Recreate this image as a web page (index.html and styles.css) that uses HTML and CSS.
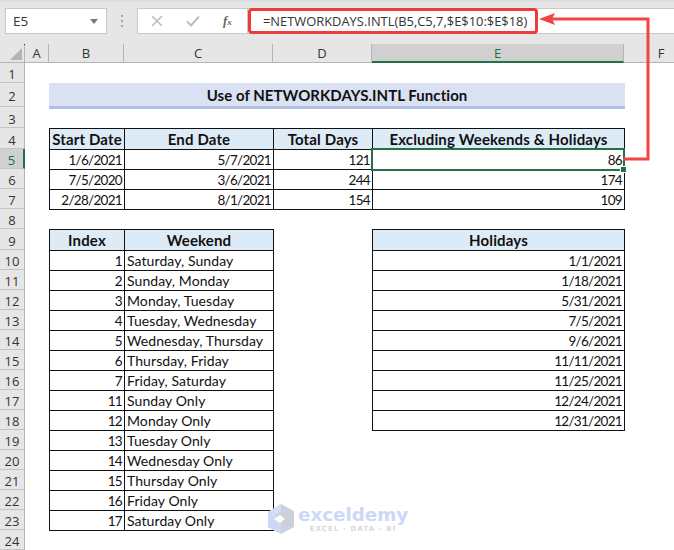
FILE: index.html
```html
<!DOCTYPE html>
<html lang="en">
<head>
<meta charset="utf-8">
<title>NETWORKDAYS.INTL</title>
<link rel="stylesheet" href="styles.css">
</head>
<body>
<div class="app">
  <div class="formula-bar">
    <div class="name-box"><span>E5</span><svg class="caret" width="8" height="5" viewBox="0 0 8 5"><path d="M0 0h8L4 5z"/></svg></div>
    <div class="grip"><i></i><i></i><i></i></div>
    <div class="fx-box">
      <svg width="12" height="12" viewBox="0 0 12 12"><path d="M1 1l10 10M11 1L1 11" stroke="#bdbdbd" stroke-width="1.6" fill="none"/></svg>
      <svg width="14" height="12" viewBox="0 0 14 12"><path d="M1 6.5l4 4 8-9" stroke="#bdbdbd" stroke-width="2" fill="none"/></svg>
      <span class="fx">f<sub>x</sub></span>
    </div>
    <div class="formula-input"><span class="formula-text">=NETWORKDAYS.INTL(B5,C5,7,$E$10:$E$18)</span></div>
  </div>
  <div class="col-headers">
    <div class="corner"><svg width="12" height="12" viewBox="0 0 12 12"><path d="M12 0v12H0z" fill="#b4b4b4"/></svg></div>
    <div class="ch a">A</div><div class="ch b">B</div><div class="ch c">C</div><div class="ch d">D</div><div class="ch e selected">E</div><div class="ch f">F</div>
  </div>
  <div class="sheet">
    <div class="row-headers">
      <div class="rh">1</div><div class="rh tall">2</div><div class="rh r3">3</div><div class="rh r4">4</div><div class="rh selected">5</div><div class="rh">6</div><div class="rh">7</div><div class="rh">8</div><div class="rh r4">9</div><div class="rh">10</div><div class="rh">11</div><div class="rh">12</div><div class="rh">13</div><div class="rh">14</div><div class="rh">15</div><div class="rh">16</div><div class="rh">17</div><div class="rh">18</div><div class="rh">19</div><div class="rh">20</div><div class="rh">21</div><div class="rh">22</div><div class="rh">23</div><div class="rh">24</div>
    </div>
    <div class="content">
      <div class="title">Use of NETWORKDAYS.INTL Function</div>
      <div class="table main-table">
        <div class="th">Start Date</div><div class="th">End Date</div><div class="th">Total Days</div><div class="th">Excluding Weekends &amp; Holidays</div>
        <div class="td num">1/6/2021</div><div class="td num">5/7/2021</div><div class="td num">121</div><div class="td num">86</div>
        <div class="td num">7/5/2020</div><div class="td num">3/6/2021</div><div class="td num">244</div><div class="td num">174</div>
        <div class="td num">2/28/2021</div><div class="td num">8/1/2021</div><div class="td num">154</div><div class="td num">109</div>
      </div>
      <div class="lower">
        <div class="table weekend-table">
          <div class="th">Index</div><div class="th">Weekend</div>
          <div class="td num">1</div><div class="td">Saturday, Sunday</div>
          <div class="td num">2</div><div class="td">Sunday, Monday</div>
          <div class="td num">3</div><div class="td">Monday, Tuesday</div>
          <div class="td num">4</div><div class="td">Tuesday, Wednesday</div>
          <div class="td num">5</div><div class="td">Wednesday, Thursday</div>
          <div class="td num">6</div><div class="td">Thursday, Friday</div>
          <div class="td num">7</div><div class="td">Friday, Saturday</div>
          <div class="td num">11</div><div class="td">Sunday Only</div>
          <div class="td num">12</div><div class="td">Monday Only</div>
          <div class="td num">13</div><div class="td">Tuesday Only</div>
          <div class="td num">14</div><div class="td">Wednesday Only</div>
          <div class="td num">15</div><div class="td">Thursday Only</div>
          <div class="td num">16</div><div class="td">Friday Only</div>
          <div class="td num">17</div><div class="td">Saturday Only</div>
        </div>
        <div class="table holiday-table">
          <div class="th">Holidays</div>
          <div class="td num">1/1/2021</div>
          <div class="td num">1/18/2021</div>
          <div class="td num">5/31/2021</div>
          <div class="td num">7/5/2021</div>
          <div class="td num">9/6/2021</div>
          <div class="td num">11/11/2021</div>
          <div class="td num">11/25/2021</div>
          <div class="td num">12/24/2021</div>
          <div class="td num">12/31/2021</div>
        </div>
      </div>
    </div>
  </div>

  <div class="cell-cursor"><i class="handle"></i></div>
  <div class="formula-highlight"></div>
  <svg class="callout" width="674" height="170" viewBox="0 0 674 170">
    <path d="M623 159H648V19H548" fill="none" stroke="#f24444" stroke-width="3"/>
    <path d="M539 19l16-6-3 6 3 6z" fill="#f24444"/>
  </svg>
  <div class="watermark">
    <svg width="29" height="32" viewBox="0 0 29 32"><path d="M15 1l13 7v16l-13 7-13-7V9z" fill="#ccd0da"/><path d="M2 9l13 7v15L2 24z" fill="#cbd8f6"/><path d="M15 1L2 9l6 4 7-5z" fill="#d4def8"/><path d="M8 16l6-4 5 4-5 4z" fill="#fff"/></svg>
    <div class="wm-text"><span class="wm-name">exceldemy</span><span class="wm-sub">EXCEL - DATA - BI</span></div>
  </div>
</div>
</body>
</html>
```
FILE: styles.css
```css
* { box-sizing: border-box; }
html, body { margin: 0; padding: 0; }
body { width: 674px; height: 550px; overflow: hidden; background: #fff; font-family: "Lato", "Liberation Sans", sans-serif; color: #111; }
.app { position: relative; width: 674px; height: 550px; overflow: hidden; }

.formula-bar { height: 44px; background: #e6e6e6; border-top: 2px solid #dcdcdc; display: flex; align-items: flex-start; padding: 6px 0 0 5px; }
.name-box { width: 102px; height: 26px; background: #fff; border: 1px solid #c8c8c8; display: flex; align-items: center; justify-content: space-between; padding: 0 8px 0 7px; font: 13.5px "Open Sans", sans-serif; color: #333; }
.caret { fill: #777; }
.grip { width: 30px; height: 26px; display: flex; flex-direction: column; align-items: center; justify-content: center; gap: 3px; }
.grip i { width: 2px; height: 2px; background: #a8a8a8; }
.fx-box { width: 110px; height: 26px; background: #fff; border: 1px solid #c8c8c8; border-right: 0; display: flex; align-items: center; gap: 23px; padding-left: 13px; }
.fx { font: italic bold 13px "Liberation Serif", serif; color: #666; width: 14px; }
.fx sub { font-size: 9px; vertical-align: baseline; }
.formula-input { flex: 1; height: 26px; background: #fff; border: 1px solid #c8c8c8; border-right: 0; display: flex; align-items: center; padding-left: 15px; }
.formula-text { font: 12.9px "Open Sans", sans-serif; color: #333; white-space: nowrap; }

.col-headers { height: 19px; display: flex; background: #e6e6e6; border-bottom: 1px solid #b5b5b5; }
.corner { position: relative; width: 25px; flex: none; display: flex; align-items: flex-end; justify-content: flex-end; padding: 0 2px 2px 0; border-right: 1px solid #b5b5b5; }
.corner::before { content: ""; position: absolute; top: 0; right: -1px; width: 1px; height: 1px; background: #222; }
.ch { flex: none; display: flex; align-items: center; justify-content: center; font: 13px "Open Sans", sans-serif; color: #333; border-right: 1px solid #b5b5b5; }
.ch.a { width: 24px; } .ch.b { width: 75px; } .ch.c { width: 149px; } .ch.d { width: 99px; } .ch.e { width: 252px; } .ch.f { width: 74px; border-right: 0; }
.ch.selected { background: #d0d0d0; color: #1f6b46; border-bottom: 2px solid #217346; margin-bottom: -1px; }

.sheet { display: flex; }
.row-headers { width: 25px; flex: none; background: #e6e6e6; border-right: 1px solid #b5b5b5; }
.rh { height: 20px; padding-top: 3px; display: flex; align-items: center; justify-content: center; font: 13px "Open Sans", sans-serif; color: #333; border-bottom: 1px solid #c4c4c4; }
.rh.tall { height: 24px; } .rh.r3 { height: 21px; } .rh.r4 { height: 21px; }
.rh.selected { background: #d0d0d0; color: #1f6b46; border-right: 2px solid #217346; margin-right: -1px; }

.content { flex: 1; padding: 20px 0 0 24px; }
.title { width: 576px; height: 26px; padding-top: 1px; background: #d9e1f2; border-bottom: 3px solid #b0c1e4; display: flex; align-items: center; justify-content: center; font-weight: 700; font-size: 15px; letter-spacing: .05px; color: #111; }

.table { display: grid; border-top: 1px solid #111; border-left: 1px solid #111; background: #fff; }
.main-table { width: 576px; margin-top: 19px; grid-template-columns: 75px 149px 99px 252px; grid-template-rows: 21px repeat(3, 20px); }
.lower { display: flex; margin-top: 19px; gap: 98px; align-items: flex-start; }
.weekend-table { width: 225px; grid-template-columns: 75px 149px; grid-template-rows: 21px repeat(14, 20px); }
.holiday-table { width: 253px; grid-template-columns: 252px; grid-template-rows: 21px repeat(9, 20px); }
.th, .td { border-right: 1px solid #111; border-bottom: 1px solid #111; display: flex; align-items: center; font-size: 14px; letter-spacing: .08px; white-space: nowrap; padding: 0 2px; }
.th { background: #ddebf7; font-weight: 700; font-size: 15px; letter-spacing: .15px; justify-content: center; }
.td.num { justify-content: flex-end; font-size: 13.5px; letter-spacing: -.7px; padding-right: 2px; }

.cell-cursor { position: absolute; left: 371px; top: 148px; width: 254px; height: 23px; border: 2px solid #217346; }
.handle { position: absolute; right: -3px; bottom: -3px; width: 5px; height: 5px; background: #217346; outline: 1px solid #fff; }
.formula-highlight { position: absolute; left: 248px; top: 8px; width: 290px; height: 26px; border: 3px solid #ee3b3b; border-radius: 4px; }
.callout { position: absolute; left: 0; top: 0; pointer-events: none; }
.watermark { position: absolute; left: 266px; top: 503px; display: flex; gap: 3px; align-items: flex-start; }
.wm-text { display: flex; flex-direction: column; padding-top: 2px; }
.wm-name { font: 700 18.3px/20px "DejaVu Sans", sans-serif; color: #cbd8f8; }
.wm-sub { font: 700 7px/9px "DejaVu Sans", sans-serif; color: #d8d8d8; letter-spacing: 1.1px; text-align: center; }
```
